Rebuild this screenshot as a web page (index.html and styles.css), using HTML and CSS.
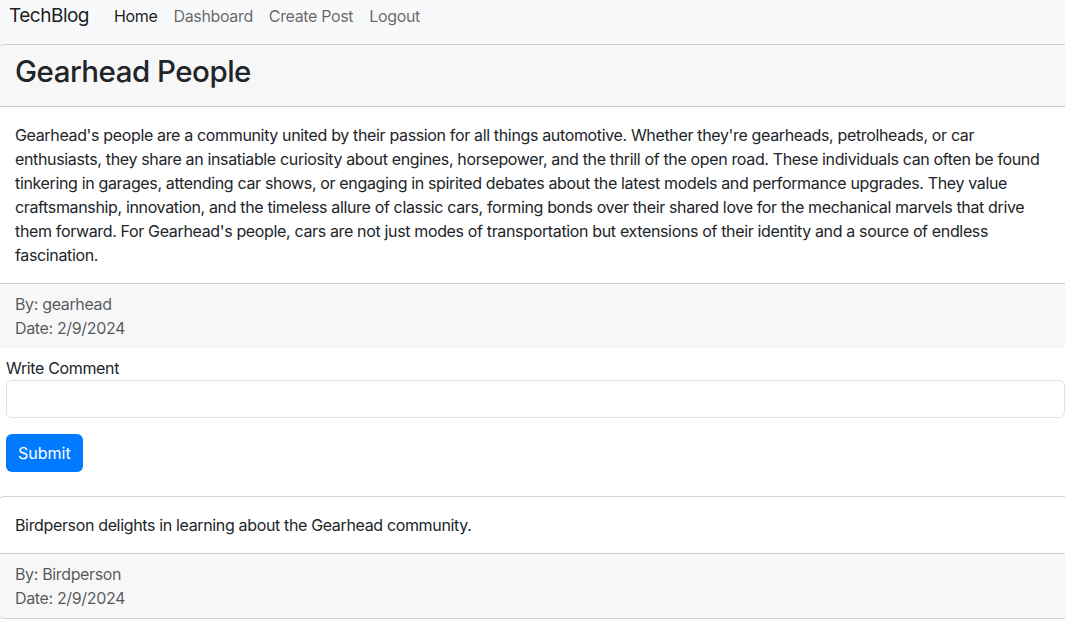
FILE: index.html
```html
<!DOCTYPE html>
<html lang="en">
<head>
<meta charset="utf-8">
<title>TechBlog</title>
<link rel="stylesheet" href="styles.css">
</head>
<body>
<nav class="navbar">
  <a class="brand" href="#">TechBlog</a>
  <ul class="nav">
    <li><a class="nav-link active" href="#">Home</a></li>
    <li><a class="nav-link" href="#">Dashboard</a></li>
    <li><a class="nav-link" href="#">Create Post</a></li>
    <li><a class="nav-link" href="#">Logout</a></li>
  </ul>
</nav>

<article class="card card-post">
  <header class="card-header">
    <h2 class="post-title">Gearhead People</h2>
  </header>
  <div class="card-body">
    <p class="card-text">Gearhead's people are a community united by their passion for all things automotive. Whether they're gearheads, petrolheads, or car enthusiasts, they share an insatiable curiosity about engines, horsepower, and the thrill of the open road. These individuals can often be found tinkering in garages, attending car shows, or engaging in spirited debates about the latest models and performance upgrades. They value craftsmanship, innovation, and the timeless allure of classic cars, forming bonds over their shared love for the mechanical marvels that drive them forward. For Gearhead's people, cars are not just modes of transportation but extensions of their identity and a source of endless fascination.</p>
  </div>
  <footer class="card-footer">
    <div>By: gearhead</div>
    <div>Date: 2/9/2024</div>
  </footer>
</article>

<form class="comment-form">
  <label class="form-label" for="comment">Write Comment</label>
  <input class="form-control" id="comment" type="text">
  <button class="btn-primary" type="button">Submit</button>
</form>

<article class="card card-comment">
  <div class="card-body">
    <p class="card-text">Birdperson delights in learning about the Gearhead community.</p>
  </div>
  <footer class="card-footer">
    <div>By: Birdperson</div>
    <div>Date: 2/9/2024</div>
  </footer>
</article>
</body>
</html>
```

FILE: styles.css
```css
html, body {
  overflow-x: hidden;
}
body {
  margin: 0;
  font-family: Inter, "Liberation Sans", sans-serif;
  font-size: 16px;
  line-height: 1.5;
  letter-spacing: -0.35px;
  color: #212529;
  background: #fff;
}
a { text-decoration: none; }

.navbar {
  display: flex;
  align-items: flex-start;
  height: 44px;
  box-sizing: border-box;
  padding: 4px 8px 0 9px;
  background: #f8f9fa;
}
.brand {
  font-size: 19px;
  line-height: 24px;
  letter-spacing: -0.5px;
  color: rgba(0, 0, 0, 0.9);
  margin-right: 17px;
}
.nav {
  display: flex;
  list-style: none;
  margin: 0;
  padding: 0;
}
.nav-link {
  display: block;
  padding: 0 8px;
  line-height: 24px;
  color: rgba(0, 0, 0, 0.6);
}
.nav-link.active { color: rgba(0, 0, 0, 0.9); }

.card {
  width: 1080px;
  margin-left: -2px;
  border: 1px solid rgba(0, 0, 0, 0.18);
  border-radius: 6px;
  background: #fff;
  overflow: hidden;
}
.card-post {
  border-bottom: 0;
  border-radius: 6px 6px 0 0;
}
.card-header {
  padding: 8px 16px;
  background: #f7f7f7;
  border-bottom: 1px solid rgba(0, 0, 0, 0.18);
}
.post-title {
  margin: 0 0 8px;
  font-size: 29.5px;
  line-height: 37px;
  letter-spacing: -0.5px;
  font-weight: 500;
}
.card-body { padding: 16px 16px; }
.card-text { margin: 0; max-width: 1036px; }
.card-footer {
  padding: 8px 16px;
  background: #f7f7f7;
  border-top: 1px solid rgba(0, 0, 0, 0.18);
  color: rgba(33, 37, 41, 0.75);
}

.comment-form {
  display: flex;
  flex-direction: column;
  align-items: flex-start;
  padding: 8px 0 24px 6px;
}
.form-label { line-height: 24px; }
.form-control {
  box-sizing: border-box;
  width: 1059px;
  height: 38px;
  padding: 6px 12px;
  font: inherit;
  border: 1px solid #dee2e6;
  border-radius: 6px;
  margin-bottom: 16px;
}
.btn-primary {
  font: inherit;
  line-height: 24px;
  padding: 7px 12px;
  color: #fff;
  background: #007bff;
  border: 0;
  border-radius: 6px;
}
```
